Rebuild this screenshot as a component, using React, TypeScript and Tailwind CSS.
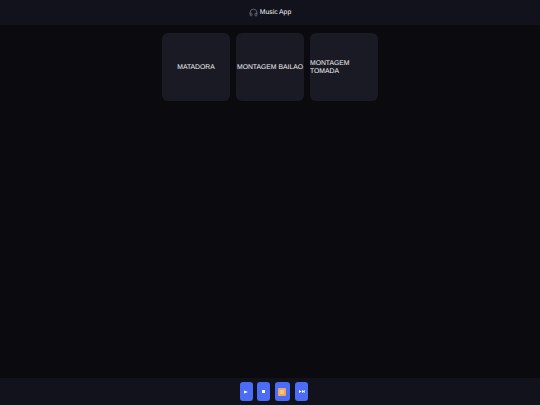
import { Headphones } from "lucide-react";

const tracks = ["MATADORA", "MONTAGEM BAILAO", "MONTAGEM TOMADA"];

function Control({ className, children }: { className: string; children: React.ReactNode }) {
  return (
    <button className={`flex h-[19px] items-center justify-center rounded-[3px] bg-[#4a6cf7] text-white ${className}`}>
      {children}
    </button>
  );
}

export default function App() {
  return (
    <div className="flex h-[405px] w-[540px] flex-col bg-[#0b0b0f] font-['Liberation_Sans',sans-serif] text-[#f0f0f0] antialiased [text-rendering:geometricPrecision]">
      <header className="flex h-[25px] items-center justify-center gap-[2px] bg-[#12121c] text-[6.8px]">
        <Headphones size={9} strokeWidth={1.5} className="text-[#9a9a9a]" />
        <span className="pt-[2px]">Music App</span>
      </header>
      <main className="flex flex-1 justify-center gap-[6px] pt-[8px]">
        {tracks.map((t) => (
          <div
            key={t}
            className="flex h-[68px] w-[68px] items-center rounded-[6px] bg-[#1a1a24] pt-[1px] text-[6.8px] leading-[8px]"
          >
            <span className={t === "MATADORA" ? "w-full text-center" : t === "MONTAGEM BAILAO" ? "w-full text-center whitespace-nowrap" : ""}>
              {t}
            </span>
          </div>
        ))}
      </main>
      <footer className="flex h-[27px] items-center justify-center gap-[4.8px] bg-[#12121c] pl-[8.3px]">
        <Control className="w-[12.7px]">
          <svg width="4" height="4" viewBox="0 0 4 4"><path d="M0 0.5 L4 2 L0 3.5 Z" fill="#fff" /></svg>
        </Control>
        <Control className="w-[12.7px]">
          <svg width="3" height="3" viewBox="0 0 3 3"><rect width="3" height="3" fill="#fff" /></svg>
        </Control>
        <Control className="w-[15px]">
          <svg width="8" height="8" viewBox="0 0 8 8"><rect width="8" height="8" rx="1" fill="#f0a860" /><path d="M2 3h4M6 5H2" stroke="#fff" strokeWidth="0.6" /></svg>
        </Control>
        <Control className="w-[13.6px]">
          <svg width="6" height="3" viewBox="0 0 6 3"><path d="M0 0 L2.5 1.5 L0 3 Z M3 0 L5.5 1.5 L3 3 Z" fill="#fff" /><rect x="5.4" width="0.6" height="3" fill="#fff" /></svg>
        </Control>
      </footer>
    </div>
  );
}
